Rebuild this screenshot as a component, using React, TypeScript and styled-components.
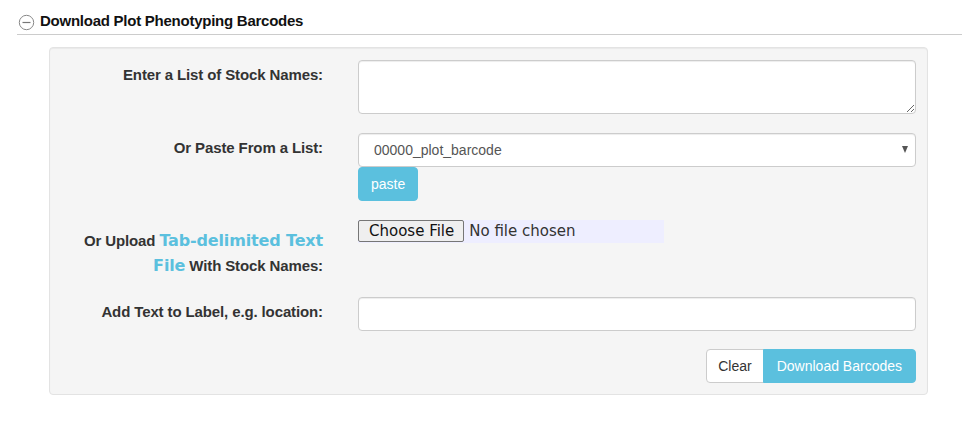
import React from "react";
import styled, { createGlobalStyle } from "styled-components";

const GlobalStyle = createGlobalStyle`
  html, body { margin: 0; padding: 0; background: #ffffff; }
  body {
    font-family: "Liberation Sans", Arial, Helvetica, sans-serif;
    font-size: 14px;
    line-height: 1.42857;
    color: #333333;
  }
  * { box-sizing: border-box; }
`;

const Page = styled.div`
  width: 975px;
  height: 424px;
  padding: 10px 13px 0 17px;
`;

const SectionHeader = styled.div`
  display: flex;
  align-items: center;
  gap: 5px;
  height: 25px;
  padding-left: 1px;
  border-bottom: 1px solid #cccccc;
`;

const Title = styled.h4`
  margin: 0;
  font-size: 15px;
  font-weight: bold;
  letter-spacing: -0.25px;
  color: #111111;
  line-height: 20px;
  position: relative;
  top: -1px;
`;

const Well = styled.div`
  margin: 12px 34px 0 32px;
  background: #f5f5f5;
  border: 1px solid #e3e3e3;
  border-radius: 4px;
  box-shadow: inset 0 1px 1px rgba(0, 0, 0, 0.05);
  padding: 12px 11px 11px 19px;
  display: grid;
  grid-template-columns: 254px 1fr;
  column-gap: 35px;
  row-gap: 19px;
`;

const Label = styled.label<{ $pad?: number; $lh?: number }>`
  text-align: right;
  font-weight: bold;
  font-size: 15px;
  letter-spacing: -0.12px;
  color: #333333;
  padding-top: ${(p) => p.$pad ?? 5}px;
  line-height: ${(p) => p.$lh ?? 20}px;
`;

const DocLink = styled.a`
  font-family: "DejaVu Sans", Verdana, sans-serif;
  font-weight: bold;
  font-size: 16px;
  line-height: 19px;
  letter-spacing: -0.15px;
  color: #5bc0de;
  text-decoration: none;
`;

const Control = styled.div`
  display: flex;
  flex-direction: column;
  align-items: flex-start;
`;

const fieldBase = `
  width: 100%;
  border: 1px solid #cccccc;
  border-radius: 4px;
  background: #ffffff;
  box-shadow: inset 0 1px 1px rgba(0, 0, 0, 0.075);
  font-family: "Liberation Sans", Arial, sans-serif;
  font-size: 14px;
  color: #555555;
  outline: none;
`;

const TextArea = styled.textarea`
  ${fieldBase}
  height: 54px;
  padding: 6px 12px;
  display: block;
`;

const SelectWrap = styled.div`
  position: relative;
  width: 100%;
`;

const Select = styled.select`
  ${fieldBase}
  appearance: none;
  -webkit-appearance: none;
  height: 34px;
  padding: 6px 12px 6px 15px;
  display: block;
`;

const Caret = styled.span`
  position: absolute;
  right: 8px;
  top: 13px;
  width: 0;
  height: 0;
  border-left: 3.5px solid transparent;
  border-right: 3.5px solid transparent;
  border-top: 7px solid #555555;
  pointer-events: none;
`;

const Button = styled.button<{ $variant?: "info" | "default" }>`
  height: 34px;
  padding: 6px 12px;
  font-family: "Liberation Sans", Arial, sans-serif;
  font-size: 14px;
  line-height: 20px;
  border-radius: 4px;
  border: 1px solid ${(p) => (p.$variant === "info" ? "#5bc0de" : "#cccccc")};
  background: ${(p) => (p.$variant === "info" ? "#5bc0de" : "#ffffff")};
  color: ${(p) => (p.$variant === "info" ? "#ffffff" : "#333333")};
  cursor: pointer;
`;

const FileInput = styled.input`
  width: 306px;
  height: 23px;
  background: #eeeeff;
  font-family: "DejaVu Sans", Verdana, sans-serif;
  font-size: 15px;
  color: #333333;
  padding: 0;
  line-height: 21px;
  &::file-selector-button {
    font-family: "DejaVu Sans", Verdana, sans-serif;
    font-size: 15px;
    height: 22px;
    padding: 0 9px 0 10px;
    margin-right: 5px;
    background: #efefef;
    border: 1px solid #767676;
    border-radius: 2px;
    color: #111111;
  }
`;

const TextInput = styled.input`
  ${fieldBase}
  height: 34px;
  padding: 6px 12px;
  display: block;
`;

const ButtonGroup = styled.div`
  grid-column: 2;
  display: flex;
  justify-content: flex-end;
  margin-top: -1px;
  & > button:first-child {
    border-top-right-radius: 0;
    border-bottom-right-radius: 0;
    padding: 6px 11px;
  }
  & > button:last-child {
    border-top-left-radius: 0;
    border-bottom-left-radius: 0;
    margin-left: -1px;
    padding: 6px 13px;
  }
`;

function CollapseIcon() {
  return (
    <svg width="17" height="17" viewBox="0 0 17 17" aria-hidden="true">
      <circle cx="8.5" cy="8.5" r="7.2" fill="none" stroke="#888888" strokeWidth="1" />
      <line x1="4.5" y1="8.5" x2="12.5" y2="8.5" stroke="#777777" strokeWidth="1.2" />
    </svg>
  );
}

export default function App() {
  return (
    <>
      <GlobalStyle />
      <Page>
        <SectionHeader>
          <CollapseIcon />
          <Title>Download Plot Phenotyping Barcodes</Title>
        </SectionHeader>
        <Well>
          <Label>Enter a List of Stock Names:</Label>
          <Control>
            <TextArea />
          </Control>

          <Label>Or Paste From a List:</Label>
          <Control>
            <SelectWrap>
              <Select defaultValue="00000_plot_barcode">
                <option value="00000_plot_barcode">00000_plot_barcode</option>
              </Select>
              <Caret />
            </SelectWrap>
            <Button $variant="info">paste</Button>
          </Control>

          <Label $pad={8} $lh={25}>
            <span>Or Upload </span>
            <DocLink href="#">Tab-delimited Text</DocLink>{" "}
            <DocLink href="#">File</DocLink>
            <span> With Stock Names:</span>
          </Label>
          <Control>
            <FileInput type="file" />
          </Control>

          <Label>Add Text to Label, e.g. location:</Label>
          <Control>
            <TextInput type="text" />
          </Control>

          <ButtonGroup>
            <Button>Clear</Button>
            <Button $variant="info">Download Barcodes</Button>
          </ButtonGroup>
        </Well>
      </Page>
    </>
  );
}
